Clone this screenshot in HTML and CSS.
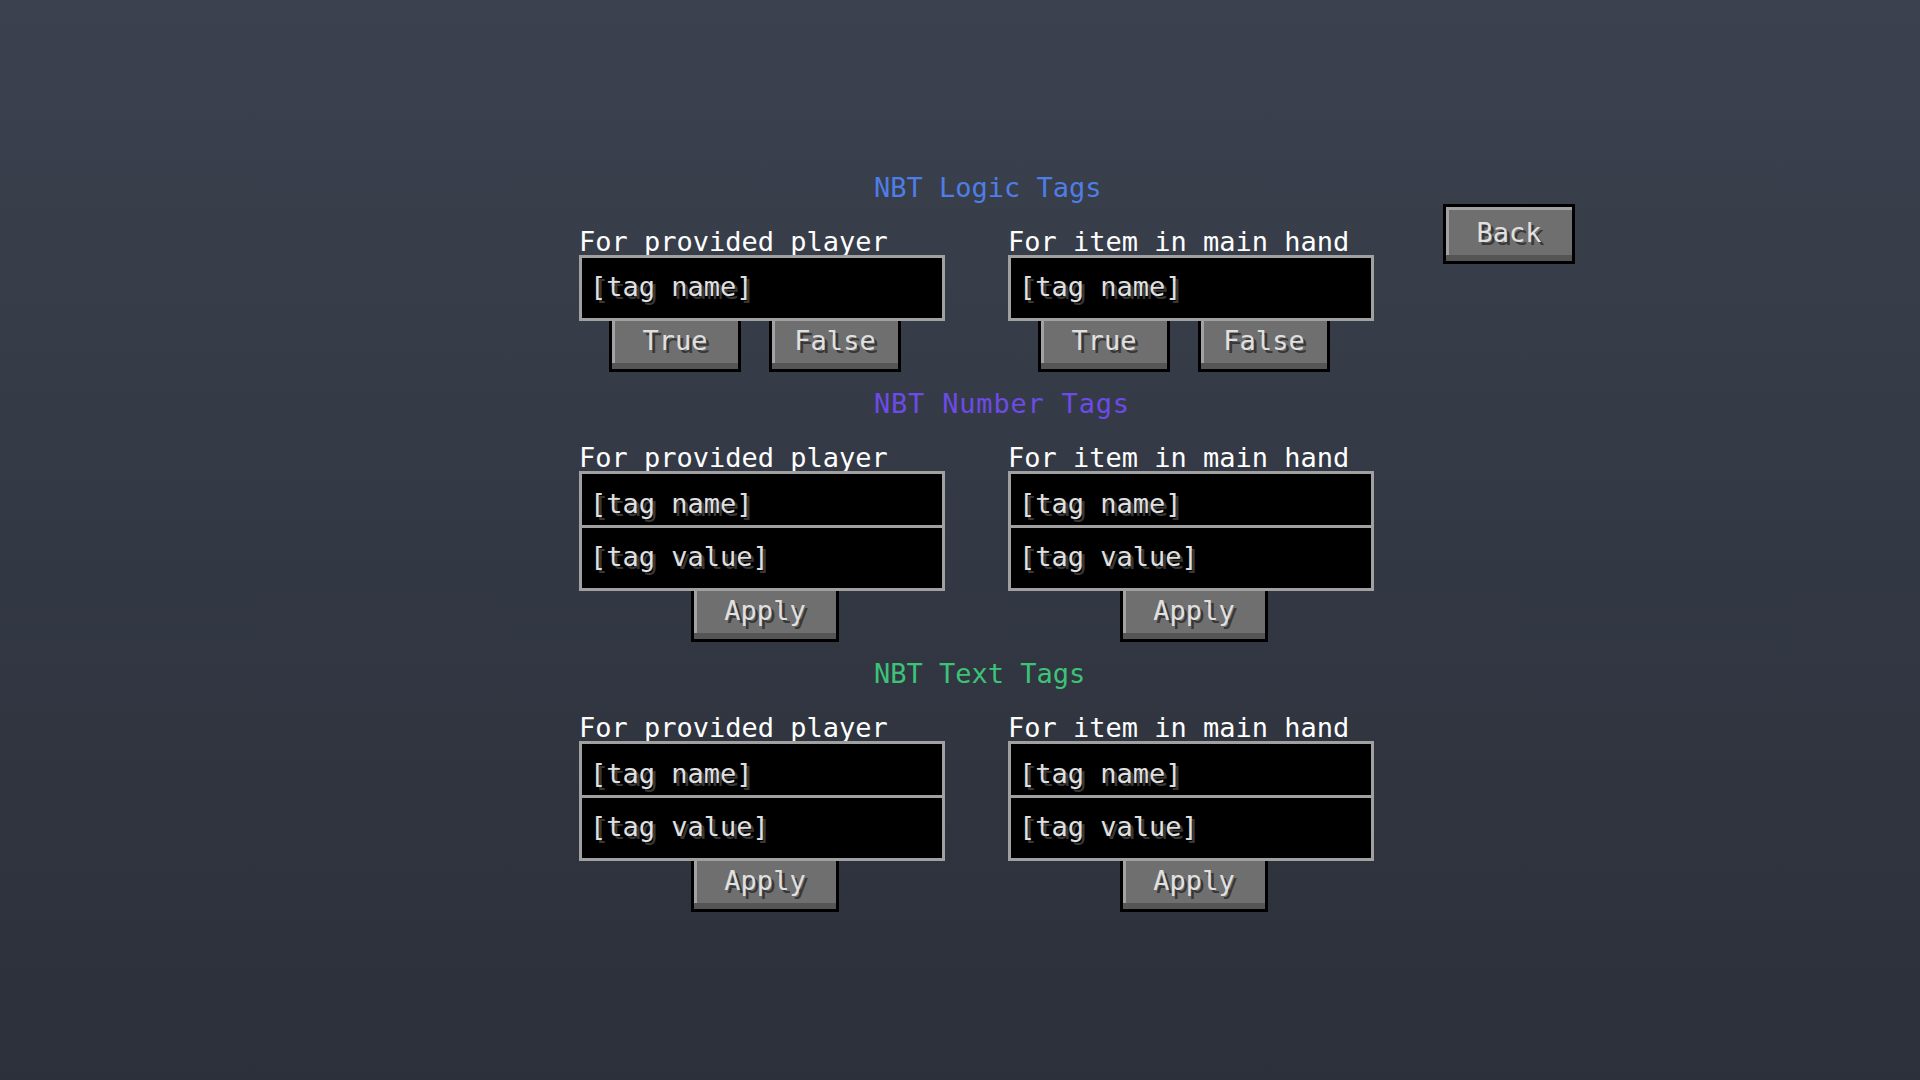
FILE: index.html
```html
<!DOCTYPE html>
<html lang="en">
<head>
  <meta charset="UTF-8" />
  <title>NBT Tags</title>
  <link rel="stylesheet" href="styles.css">
</head>
<body>
<div class="screen">
  <div class="panel">

    <div class="section">
      <div class="title logic">NBT Logic Tags</div>
      <div class="cols">
        <div class="col">
          <div class="label">For provided player</div>
          <div class="box">
            <div class="field single">[tag name]</div>
          </div>
          <div class="bool-row">
            <button class="mc-btn small">True</button>
            <button class="mc-btn small">False</button>
          </div>
        </div>
        <div class="col">
          <div class="label">For item in main hand</div>
          <div class="box">
            <div class="field single">[tag name]</div>
          </div>
          <div class="bool-row">
            <button class="mc-btn small">True</button>
            <button class="mc-btn small">False</button>
          </div>
        </div>
      </div>
    </div>

    <div class="section">
      <div class="title number">NBT Number Tags</div>
      <div class="cols">
        <div class="col">
          <div class="label">For provided player</div>
          <div class="box">
            <div class="field name">[tag name]</div>
            <div class="field value">[tag value]</div>
          </div>
          <div class="apply-row"><button class="mc-btn apply">Apply</button></div>
        </div>
        <div class="col">
          <div class="label">For item in main hand</div>
          <div class="box">
            <div class="field name">[tag name]</div>
            <div class="field value">[tag value]</div>
          </div>
          <div class="apply-row"><button class="mc-btn apply">Apply</button></div>
        </div>
      </div>
    </div>

    <div class="section">
      <div class="title text">NBT Text Tags</div>
      <div class="cols">
        <div class="col">
          <div class="label">For provided player</div>
          <div class="box">
            <div class="field name">[tag name]</div>
            <div class="field value">[tag value]</div>
          </div>
          <div class="apply-row"><button class="mc-btn apply">Apply</button></div>
        </div>
        <div class="col">
          <div class="label">For item in main hand</div>
          <div class="box">
            <div class="field name">[tag name]</div>
            <div class="field value">[tag value]</div>
          </div>
          <div class="apply-row"><button class="mc-btn apply">Apply</button></div>
        </div>
      </div>
    </div>

  </div>
  <div class="side">
    <button class="mc-btn small">Back</button>
  </div>
</div>
</body>
</html>
```

FILE: styles.css
```css
html, body {
  margin: 0;
  height: 100%;
}
body {
  background: linear-gradient(#3b414e, #2b303a);
  font-family: "DejaVu Sans Mono", "Liberation Mono", monospace;
  font-size: 27px;
  line-height: 27px;
  color: #fff;
}
.screen {
  display: flex;
  align-items: flex-start;
  padding: 174px 0 0 579px;
}
.panel {
  width: 795px;
}
.side {
  margin-left: 69px;
  padding-top: 30px;
}

/* section headings */
.title {
  margin-left: 295px;
  height: 27px;
  margin-bottom: 27px;
}
.title.logic { color: #4f7de6; }
.title.number { color: #6d4be6; letter-spacing: 0.8px; }
.title.text { color: #3cc378; }

.section {
  margin-bottom: 18px;
}
.cols {
  display: grid;
  grid-template-columns: 366px 366px;
  column-gap: 63px;
}
.label {
  height: 27px;
  white-space: nowrap;
}

/* text fields */
.box {
  position: relative;
  z-index: 1;
  border: 3px solid #a0a0a0;
  background: #000;
}
.field {
  color: #e0e0e0;
  text-shadow: 3px 3px 0 #383838;
  padding-left: 8px;
  box-sizing: border-box;
  white-space: nowrap;
}
.field.single {
  height: 60px;
  padding-top: 15px;
}
.field.name {
  height: 54px;
  padding-top: 16px;
  border-bottom: 3px solid #a0a0a0;
}
.field.value {
  height: 60px;
  padding-top: 15px;
}

/* buttons */
.mc-btn {
  display: block;
  box-sizing: border-box;
  height: 60px;
  padding: 0 0 3px;
  border: 3px solid #000;
  background: #6f6f6f;
  box-shadow: inset 0 -6px 0 #555, inset 3px 3px 0 #a2a2a2;
  font-family: inherit;
  font-size: 27px;
  line-height: 27px;
  color: #e0e0e0;
  text-shadow: 3px 3px 0 #383838;
  cursor: pointer;
}
.mc-btn.small {
  width: 132px;
}
.mc-btn.apply {
  width: 148px;
}
.bool-row {
  display: flex;
  gap: 28px;
  margin: -9px 0 0 30px;
}
.apply-row {
  margin: -9px 0 0 112px;
}
```
